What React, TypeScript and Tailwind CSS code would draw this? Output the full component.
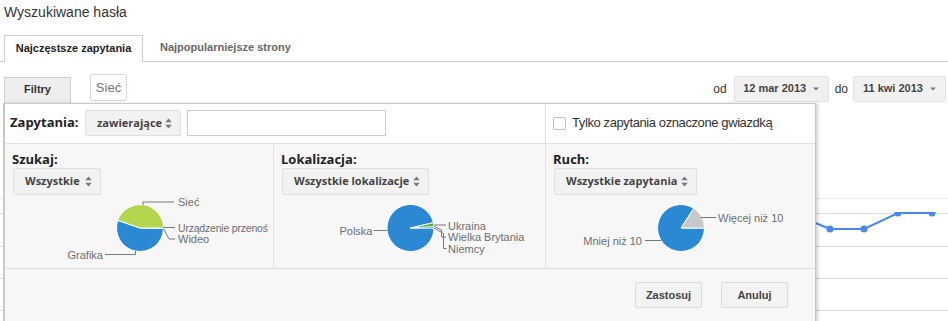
import React from "react";

const rad = (d: number) => (d * Math.PI) / 180;
function arc(cx: number, cy: number, r: number, a0: number, a1: number) {
  const x0 = cx + r * Math.cos(rad(a0));
  const y0 = cy + r * Math.sin(rad(a0));
  const x1 = cx + r * Math.cos(rad(a1));
  const y1 = cy + r * Math.sin(rad(a1));
  const large = a1 - a0 > 180 ? 1 : 0;
  return `M${cx},${cy} L${x0.toFixed(2)},${y0.toFixed(2)} A${r},${r} 0 ${large} 1 ${x1.toFixed(2)},${y1.toFixed(2)} Z`;
}

const LBL = { fontSize: 11, fill: "#6e6e6e", fontFamily: "'Liberation Sans', Arial, sans-serif" };

function UpDown() {
  return (
    <svg width="7" height="11" viewBox="0 0 7 11" className="shrink-0">
      <path d="M3.5 0.5 L6.8 4.3 H0.2 Z" fill="#7a7a7a" />
      <path d="M3.5 10.5 L6.8 6.7 H0.2 Z" fill="#7a7a7a" />
    </svg>
  );
}

function Caret() {
  return (
    <svg width="6" height="4" viewBox="0 0 6 4" className="shrink-0">
      <path d="M0 0.5 H6 L3 3.5 Z" fill="#7a7a7a" />
    </svg>
  );
}

function Select({ w, h, text }: { w: string; h: string; text: string }) {
  return (
    <div
      className={`${w} ${h} flex items-center justify-between pl-[11px] pr-[8px] bg-[#f2f2f2] border border-[#e0e0e0] rounded-[2px] font-['Open_Sans',sans-serif] font-bold text-[11px] text-[#444]`}
    >
      <span className="whitespace-nowrap">{text}</span>
      <UpDown />
    </div>
  );
}

function Pie1() {
  const cx = 135, cy = 33, r = 23.5;
  return (
    <svg width="268" height="73" className="block overflow-visible">
      <path d={arc(cx, cy, r, 1.5, 199)} fill="#2b89d3" stroke="#fff" strokeWidth="1" />
      <path d={arc(cx, cy, r, 199, 360)} fill="#b2d64c" stroke="#fff" strokeWidth="1" />
      <path d="M138,10.5 V7 H169" stroke="#777" fill="none" />
      <text x="173" y="7" dominantBaseline="central" {...LBL}>Sieć</text>
      <path d="M158.5,32.5 H170" stroke="#777" fill="none" />
      <text x="173" y="33" dominantBaseline="central" {...LBL} fontSize={10.5} letterSpacing={-0.2}>Urządzenie przenoś</text>
      <path d="M158.5,33.5 L164,44 H170" stroke="#777" fill="none" />
      <text x="173" y="44" dominantBaseline="central" {...LBL}>Wideo</text>
      <path d="M100,59.5 H130.5 V56" stroke="#777" fill="none" />
      <text x="98" y="60" textAnchor="end" dominantBaseline="central" {...LBL}>Grafika</text>
    </svg>
  );
}

function Pie2() {
  const cx = 136.5, cy = 33, r = 23.5;
  return (
    <svg width="271" height="73" className="block overflow-visible">
      <path d={arc(cx, cy, r, 0, 347)} fill="#2b89d3" stroke="#fff" strokeWidth="1" />
      <path d={arc(cx, cy, r, 347, 357)} fill="#5ea82b" stroke="#fff" strokeWidth="1" />
      <path d={arc(cx, cy, r, 357, 360)} fill="#2b89d3" stroke="#fff" strokeWidth="0.6" />
      <path d="M100,35.5 H113.5" stroke="#777" fill="none" />
      <text x="98.5" y="36" textAnchor="end" dominantBaseline="central" {...LBL}>Polska</text>
      <path d="M160,30 H172" stroke="#777" fill="none" />
      <text x="174" y="30.5" dominantBaseline="central" {...LBL}>Ukraina</text>
      <path d="M160.5,31.5 L167.5,35 V42 H172" stroke="#777" fill="none" />
      <text x="174" y="42" dominantBaseline="central" {...LBL}>Wielka Brytania</text>
      <path d="M160,33 L169.5,38.5 V53.5 H172.5" stroke="#777" fill="none" />
      <text x="174" y="53.5" dominantBaseline="central" {...LBL}>Niemcy</text>
    </svg>
  );
}

function Pie3() {
  const cx = 135, cy = 33, r = 23.5;
  return (
    <svg width="269" height="73" className="block overflow-visible">
      <path d={arc(cx, cy, r, 0, 303)} fill="#2b89d3" stroke="#fff" strokeWidth="1" />
      <path d={arc(cx, cy, r, 303, 360)} fill="#c8c8c8" stroke="#fff" strokeWidth="1" />
      <path d="M155,22.5 H170" stroke="#777" fill="none" />
      <text x="172" y="22.5" dominantBaseline="central" {...LBL}>Więcej niż 10</text>
      <path d="M99,45.5 H115.5" stroke="#777" fill="none" />
      <text x="96" y="46" textAnchor="end" dominantBaseline="central" {...LBL}>Mniej niż 10</text>
    </svg>
  );
}

export default function App() {
  return (
    <div className="relative w-[948px] h-[321px] overflow-hidden bg-white font-['Liberation_Sans',Arial,sans-serif] text-[#222]">
      {/* Title */}
      <div className="h-[35px] pl-[4px] pt-[4px] text-[14px] leading-[17px] text-[#333]">Wyszukiwane hasła</div>

      {/* Tabs */}
      <div className="flex h-[27px] border-b border-[#cfcfcf]">
        <div className="ml-[4px] h-[27px] w-[139px] bg-white border-t border-l border-r border-[#cfcfcf] flex items-center justify-center pb-[2px] text-[11px] font-bold text-[#222] relative">
          Najczęstsze zapytania
        </div>
        <div className="h-[26px] pl-[17px] flex items-center pb-[2px] text-[11px] font-bold text-[#666]">
          Najpopularniejsze strony
        </div>
      </div>

      {/* Filter row */}
      <div className="flex items-start h-[41px]">
        <div className="ml-[4px] mt-[15px] w-[67px] h-[26px] bg-[#eeeeee] border-t border-l border-r border-[#d0d0d0] flex items-center justify-center pb-[3px] text-[11px] font-bold text-[#333]">
          Filtry
        </div>
        <div className="ml-[19px] mt-[12px] w-[37px] h-[27px] bg-white border border-[#d9d9d9] rounded-[2px] flex items-center justify-center text-[13px] text-[#777]">
          Sieć
        </div>
        <div className="ml-auto mt-[13px] flex items-center h-[27px] pr-[2px]">
          <span className="text-[12px] text-[#333] mr-[7px]">od</span>
          <div className="w-[95px] h-[26px] bg-[#f1f1f1] border border-[#e2e2e2] rounded-[2px] flex items-center justify-center gap-[7px] text-[11px] font-bold text-[#444]">
            <span>12 mar 2013</span>
            <Caret />
          </div>
          <span className="text-[12px] text-[#333] ml-[6px] mr-[5px]">do</span>
          <div className="w-[93px] h-[26px] bg-[#f1f1f1] border border-[#e2e2e2] rounded-[2px] flex items-center justify-center gap-[7px] text-[11px] font-bold text-[#444]">
            <span>11 kwi 2013</span>
            <Caret />
          </div>
        </div>
      </div>

      {/* Chart behind the panel */}
      <svg width="948" height="218" className="block">
        <defs>
          <clipPath id="plot">
            <rect x="0" y="109" width="948" height="120" />
          </clipPath>
        </defs>
        <line x1="0" x2="948" y1="95.5" y2="95.5" stroke="#ececec" />
        <line x1="0" x2="948" y1="110.5" y2="110.5" stroke="#d9d9d9" />
        <line x1="0" x2="948" y1="143.5" y2="143.5" stroke="#d9d9d9" />
        <line x1="0" x2="948" y1="175.5" y2="175.5" stroke="#d9d9d9" />
        <line x1="0" x2="948" y1="207.5" y2="207.5" stroke="#d9d9d9" />
        <g clipPath="url(#plot)">
          <polyline points="796,112 830,126 864,126 898,110 932,110" fill="none" stroke="#4a87ee" strokeWidth="2" />
          <circle cx="830" cy="126" r="3.5" fill="#4a87ee" />
          <circle cx="864" cy="126" r="3.5" fill="#4a87ee" />
          <circle cx="898" cy="110" r="3.5" fill="#4a87ee" />
          <circle cx="932" cy="110" r="3.5" fill="#4a87ee" />
        </g>
      </svg>

      {/* Filter panel (dropdown overlay) */}
      <div className="absolute left-[3px] top-[103px] w-[813px] h-[240px] bg-[#f7f7f7] border-t border-l-2 border-r border-[#c9c9c9] shadow-[2px_0_3px_rgba(0,0,0,0.18)]">
        {/* top row */}
        <div className="flex h-[40px] bg-white border-b border-[#e2e2e2]">
          <div className="w-[541px] border-r border-[#e2e2e2] flex items-center pl-[5px] pb-[1px]">
            <span className="w-[75px] font-['Open_Sans',sans-serif] font-bold text-[13px] text-[#222]">Zapytania:</span>
            <Select w="w-[96px]" h="h-[26px]" text="zawierające" />
            <div className="ml-[6px] w-[199px] h-[26px] bg-white border border-[#cccccc]" />
          </div>
          <div className="flex-1 flex items-center pl-[7px] pb-[1px]">
            <div className="w-[13px] h-[13px] border border-[#c4c4c4] bg-white rounded-[1px]" />
            <span className="ml-[6px] text-[13px] tracking-[-0.4px] text-[#333]">Tylko zapytania oznaczone gwiazdką</span>
          </div>
        </div>

        {/* columns */}
        <div className="flex h-[125px] border-b border-[#dcdcdc]">
          <div className="w-[269px] border-r border-[#e2e2e2] pl-[7px] pt-[6px] overflow-hidden">
            <div className="h-[18px] leading-[18px] font-['Open_Sans',sans-serif] font-bold text-[13px] text-[#222]">Szukaj:</div>
            <div className="ml-[1px]">
              <Select w="w-[88px]" h="h-[27px]" text="Wszystkie" />
            </div>
            <div className="-ml-[7px]">
              <Pie1 />
            </div>
          </div>
          <div className="w-[272px] border-r border-[#e2e2e2] pl-[7px] pt-[6px] overflow-hidden">
            <div className="h-[18px] leading-[18px] font-['Open_Sans',sans-serif] font-bold text-[13px] text-[#222]">Lokalizacja:</div>
            <div className="ml-[1px]">
              <Select w="w-[147px]" h="h-[27px]" text="Wszystkie lokalizacje" />
            </div>
            <div className="-ml-[7px]">
              <Pie2 />
            </div>
          </div>
          <div className="flex-1 pl-[7px] pt-[6px] overflow-hidden">
            <div className="h-[18px] leading-[18px] font-['Open_Sans',sans-serif] font-bold text-[13px] text-[#222]">Ruch:</div>
            <div className="ml-[1px]">
              <Select w="w-[143px]" h="h-[27px]" text="Wszystkie zapytania" />
            </div>
            <div className="-ml-[7px]">
              <Pie3 />
            </div>
          </div>
        </div>

        {/* buttons */}
        <div className="flex justify-end gap-[19px] pt-[13px] pr-[27px]">
          <div className="w-[67px] h-[26px] bg-[#f3f3f3] border border-[#dcdcdc] rounded-[2px] flex items-center justify-center text-[11px] font-bold text-[#444]">
            Zastosuj
          </div>
          <div className="w-[67px] h-[26px] bg-[#f3f3f3] border border-[#dcdcdc] rounded-[2px] flex items-center justify-center text-[11px] font-bold text-[#444]">
            Anuluj
          </div>
        </div>
      </div>
    </div>
  );
}
